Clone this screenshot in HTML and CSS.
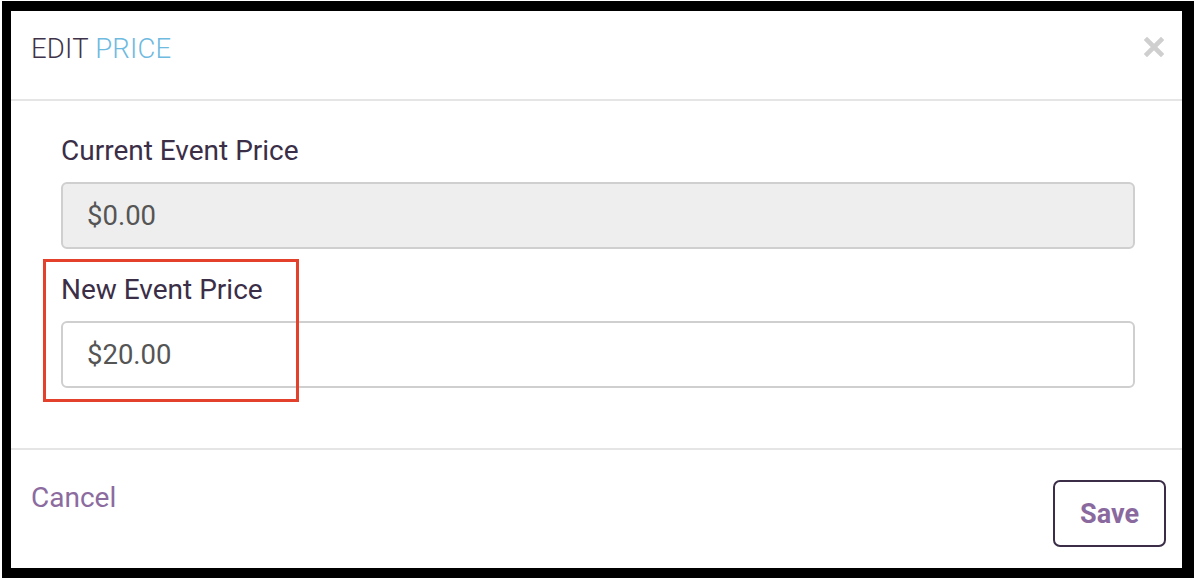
FILE: index.html
```html
<!DOCTYPE html>
<html>
<head>
<meta charset="utf-8">
<link rel="stylesheet" href="styles.css">
</head>
<body>
<div class="frame">
  <div class="modal">
    <div class="modal-header">
      <h1 class="title">EDIT <span class="accent">PRICE</span></h1>
      <span class="close" aria-label="Close">
        <svg width="20" height="20" viewBox="0 0 20 20"><path d="M3 3 L17 17 M17 3 L3 17" stroke="#cfcfcf" stroke-width="4.6" stroke-linecap="square" fill="none"/></svg>
      </span>
    </div>
    <div class="modal-body">
      <div class="field">
        <label class="label">Current Event Price</label>
        <div class="input disabled">$0.00</div>
      </div>
      <div class="field">
        <label class="label">New Event Price</label>
        <div class="input">$20.00</div>
      </div>
    </div>
    <div class="modal-footer">
      <a class="cancel">Cancel</a>
      <button class="save">Save</button>
    </div>
    <div class="highlight"></div>
  </div>
</div>
</body>
</html>
```

FILE: styles.css
```css
html, body {
  margin: 0;
  padding: 0;
  background: #ffffff;
}
body {
  font-family: Roboto, "Liberation Sans", sans-serif;
}
.frame {
  box-sizing: border-box;
  margin: 1px 0 2px 2px;
  width: 1192px;
  height: 577px;
  border-style: solid;
  border-color: #000;
  border-width: 10px 12px 10px 9px;
  background: #fff;
}
.modal {
  position: relative;
  height: 100%;
  display: flex;
  flex-direction: column;
}
.modal-header {
  box-sizing: border-box;
  height: 90px;
  border-bottom: 2px solid #e5e5e5;
  display: flex;
  justify-content: space-between;
  align-items: flex-start;
  padding: 24px 18px 0 20px;
}
.title {
  margin: 0;
  font-size: 27.5px;
  line-height: 27px;
  font-weight: 300;
  color: #3f3349;
  letter-spacing: 0.2px;
}
.accent {
  color: #6fbadf;
}
.close {
  display: block;
  margin-top: 2px;
}
.modal-body {
  box-sizing: border-box;
  height: 349px;
  border-bottom: 2px solid #e5e5e5;
  padding: 30px 47px 0 50px;
  display: flex;
  flex-direction: column;
  gap: 21px;
}
.field {
  display: flex;
  flex-direction: column;
}
.label {
  font-size: 28px;
  line-height: 40px;
  color: #3b2e47;
  margin-bottom: 11px;
}
.input {
  box-sizing: border-box;
  height: 67px;
  border: 2px solid #cfcfcf;
  border-radius: 6px;
  padding: 0 24px;
  display: flex;
  align-items: center;
  font-size: 27.5px;
  color: #555555;
  background: #ffffff;
}
.input.disabled {
  background: #eeeeee;
}
.modal-footer {
  flex: 1;
  display: flex;
  justify-content: space-between;
  align-items: flex-start;
  padding: 28px 16px 0 20px;
}
.cancel {
  font-size: 28px;
  line-height: 40px;
  color: #8c6b9f;
}
.save {
  box-sizing: border-box;
  width: 113px;
  height: 67px;
  margin-top: 2px;
  border: 2px solid #3b2d48;
  border-radius: 7px;
  background: #fff;
  font-family: Roboto, "Liberation Sans", sans-serif;
  font-size: 27px;
  font-weight: 700;
  color: #8a6a9e;
  padding: 0;
}
.highlight {
  position: absolute;
  left: 32px;
  top: 248px;
  width: 256px;
  height: 143px;
  box-sizing: border-box;
  border: 3px solid #e4412c;
  pointer-events: none;
}
```
